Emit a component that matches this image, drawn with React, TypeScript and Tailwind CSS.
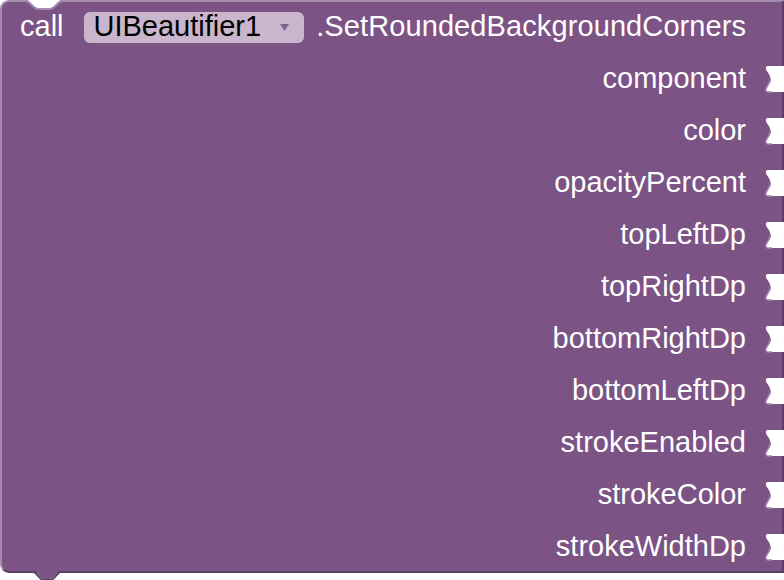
import React from 'react';

const inputs = [
  'component',
  'color',
  'opacityPercent',
  'topLeftDp',
  'topRightDp',
  'bottomRightDp',
  'bottomLeftDp',
  'strokeEnabled',
  'strokeColor',
  'strokeWidthDp',
];

function Socket() {
  return (
    <svg width="20" height="30" viewBox="0 0 20 30" className="shrink-0 -mr-[2px]">
      <path
        d="M20 2 L4 2 C2 2 1.2 4 2.5 6.5 C4.6 9.8 6.5 12 6.5 15 C6.5 18 4.6 20.2 2.5 23.5 C1.2 26 2 28 4 28 L20 28 Z"
        fill="#ffffff"
      />
      <path d="M6.5 15 C6.5 18 4.6 20.2 2.5 23.5 C1.2 26 2 28 4 28 L8 28" fill="none" stroke="#a58cae" strokeWidth="1.5" />
    </svg>
  );
}

export default function App() {
  return (
    <div className="w-[784px] h-[580px] bg-white overflow-hidden relative" style={{ fontFamily: '"Liberation Sans", Arial, sans-serif' }}>
      <div className="relative w-[784px] h-[573px] bg-[#7c5385] rounded-l-[9px] border-t-[2px] border-l-[2px] border-b-[2px] border-r-[2px] border-t-[#a58cae] border-l-[#a58cae] border-b-[#5c3d64] border-r-[#5c3d64]">
        {/* top notch */}
        <svg width="40" height="10" viewBox="0 0 40 10" className="absolute -top-[2px] left-[24px]">
          <path d="M0 0 C4 0 7 8 12 8 L24 8 C29 8 32 0 36 0 Z" fill="#ffffff" />
          <path d="M0 1 C4 1 7 9 12 9 L24 9 C29 9 32 1 36 1" fill="none" stroke="#a58cae" strokeWidth="2" />
        </svg>
        {/* bottom tab */}
        <svg width="40" height="10" viewBox="0 0 40 10" className="absolute -bottom-[10px] left-[26px]">
          <path d="M0 0 L6 0 C9 0 12 8 16 8 L22 8 C26 8 29 0 32 0 L38 0 L38 2 L33 2 C30 2 27 10 22 10 L16 10 C11 10 8 2 5 2 L0 2 Z" fill="#5c3d64" />
          <path d="M0 0 L6 0 C9 0 12 8 16 8 L22 8 C26 8 29 0 32 0 Z" fill="#7c5385" />
        </svg>

        <div className="flex flex-col -mt-[1px] text-[29px] text-white">
          <div className="h-[52px] flex items-center pl-[18px]">
            <span>call</span>
            <div className="ml-[20px] h-[31px] flex items-center bg-[#c9b6cd] rounded-[6px] pl-[10px] pr-[15px] text-black">
              <span>UIBeautifier1</span>
              <svg width="9" height="7" viewBox="0 0 9 7" className="ml-[19px]">
                <path d="M0 0 L9 0 L4.5 7 Z" fill="#84648e" />
              </svg>
            </div>
            <span className="ml-[12px] tracking-[0.1px]">.SetRoundedBackgroundCorners</span>
          </div>
          {inputs.map((name) => (
            <div key={name} className="h-[52px] flex items-center justify-end">
              <span>{name}</span>
              <div className="w-[18px]" />
              <Socket />
            </div>
          ))}
        </div>
      </div>
    </div>
  );
}
